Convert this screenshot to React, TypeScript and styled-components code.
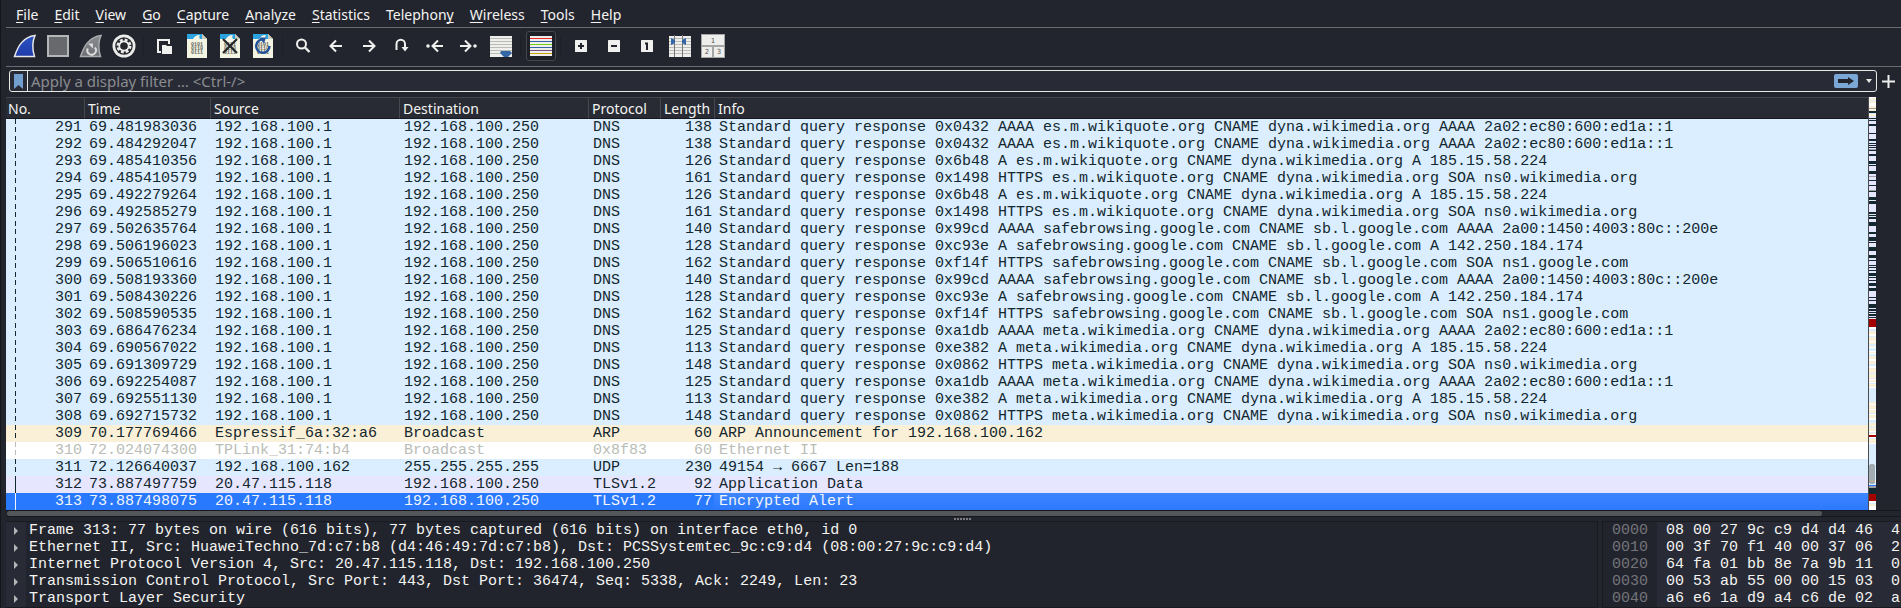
import React from "react";
import styled, { createGlobalStyle, css } from "styled-components";

const mono = `"Liberation Mono", monospace`;
const sans = `"Noto Sans", sans-serif`;

const Global = createGlobalStyle`
  * { box-sizing: border-box; }
  body { margin: 0; background: #23252e; }
  #root { min-height: 100vh; display: flex; flex-direction: column; }
  button, input { font: inherit; color: inherit; }
`;

const Window = styled.main`
  display: flex;
  flex-direction: column;
  flex: 1;
  min-width: 0;
  height: 100vh;
  overflow: hidden;
  padding-left: 5px;
  border-left: 1px solid #14151b;
  color: #f4f4f2;
  background: #23252e;
  font: 14px/20px ${sans};
`;

const MenuBar = styled.nav`
  display: flex;
  gap: 16px;
  height: 27px;
  padding: 5px 10px 0;
`;

const MenuItem = styled.button`
  padding: 0;
  border: 0;
  background: none;
  line-height: 20px;
  height: 20px;
  white-space: pre;
`;

const Key = styled.span`
  text-decoration: underline 1px #f4f4f2;
  text-underline-offset: 2px;
  text-decoration-skip-ink: none;
`;

const ToolBar = styled.div`
  display: flex;
  align-items: center;
  gap: 3px;
  height: 40px;
  padding: 0 4px 2px;
  border-top: 1px solid #6b6c71;
  border-bottom: 1px solid #6b6c71;
`;

const Tool = styled.button<{ $on?: boolean }>`
  display: grid;
  place-items: center;
  width: 30px;
  height: 30px;
  padding: 0;
  border: 1px solid ${(p) => (p.$on ? "#45474e" : "transparent")};
  border-radius: 3px;
  background: ${(p) => (p.$on ? "#1e2027" : "none")};
`;

const Divider = styled.span`
  width: 1px;
  height: 20px;
  margin: 0 2px 0 1px;
  background: #1e2027;
`;

const FilterBar = styled.form`
  display: flex;
  align-items: center;
  height: 30px;
  padding: 0 1px 2px 3px;
`;

const FilterBox = styled.div`
  display: flex;
  align-items: center;
  flex: 1;
  height: 22px;
  border: 1px solid #e9e9e4;
  border-radius: 3px;
  background: #282a35;
`;

const FilterButton = styled.button`
  display: grid;
  place-items: center;
  height: 20px;
  padding: 0 4px;
  border: 0;
  background: none;
`;

const Bookmark = styled(FilterButton)`
  border-right: 1px solid #e9e9e4;
`;

const AddFilter = styled(FilterButton)`
  padding: 0 5px;
`;

const FilterInput = styled.input`
  flex: 1;
  min-width: 0;
  height: 20px;
  padding: 0 3px;
  border: 0;
  outline: 0;
  background: none;
  font-size: 15px;
  &::placeholder { color: #8b8c90; opacity: 1; }
`;

const PacketArea = styled.section`
  display: flex;
`;

const TableClip = styled.div`
  flex: 1;
  min-width: 0;
  overflow: hidden;
  border-right: 1px solid #4a4b4f;
`;

const Table = styled.table`
  width: 100%;
  table-layout: fixed;
  border-collapse: separate;
  border-spacing: 0;
`;

const Head = styled.th`
  height: 22px;
  padding: 2px 0 0 3px;
  overflow: hidden;
  border-top: 1px solid #42454b;
  border-bottom: 1px solid #17181e;
  background: #282b33;
  font-weight: 400;
  line-height: 18px;
  text-align: left;
  white-space: nowrap;
  &:first-child { padding-left: 2px; }
  & + & { border-left: 1px solid #45484e; }
`;

type Tone = "dns" | "arp" | "plain" | "tls" | "selected";
const tones: Record<Tone, [string, string]> = {
  dns: ["#daeeff", "#12272e"],
  arp: ["#faf0d7", "#12272e"],
  plain: ["#ffffff", "#babdb6"],
  tls: ["#e7e6ff", "#12272e"],
  selected: ["#2979ff", "#f2f5fa"],
};

const Row = styled.tr<{ $tone: Tone }>`
  background: ${(p) => tones[p.$tone][0]};
  color: ${(p) => tones[p.$tone][1]};
  ${(p) =>
    p.$tone === "selected" &&
    css`
      td:last-child { background: linear-gradient(#3e86ff, #2b79ff); }
    `}
`;

const Cell = styled.td<{ $right?: boolean }>`
  height: 17px;
  padding: 0 2px 0 5px;
  overflow: hidden;
  font: 15px/17px ${mono};
  text-align: ${(p) => (p.$right ? "right" : "left")};
  white-space: pre;
`;

const NumberCell = styled(Cell)<{ $line: "dashed" | "solid" }>`
  background-image: ${(p) =>
    p.$line === "dashed"
      ? "linear-gradient(currentColor 0 5px, transparent 5px 8px, currentColor 8px 13px, transparent 13px 17px)"
      : "linear-gradient(currentColor, currentColor)"};
  background-size: 1px 17px;
  background-position: 9px 0;
  background-repeat: no-repeat;
`;

const Overview = styled.svg`
  flex: none;
  display: block;
  width: 7px;
  margin-right: 25px;
`;

const ScrollTrack = styled.div`
  padding: 0 79px 0 1px;
  border-top: 1px solid #17181e;
  border-bottom: 1px solid #17181e;
`;

const ScrollThumb = styled.div`
  height: 5px;
  border-radius: 3px;
  background: #55565a;
`;

const Splitter = styled.div`
  display: flex;
  justify-content: center;
  gap: 1px;
  height: 4px;
  padding: 1px 0 0 17px;
`;

const Grip = styled.span`
  width: 2px;
  height: 2px;
  background: #7c7d82;
`;

const Panes = styled.section`
  display: flex;
  flex: 1;
  gap: 4px;
  min-height: 0;
  font: 15px/17px ${mono};
  white-space: pre;
`;

const Pane = styled.div`
  border: solid #191a20;
  border-width: 1px 1px 1px 0;
  overflow: hidden;
`;

const Tree = styled(Pane)`
  flex: 1;
  min-width: 0;
`;

const List = styled.ul`
  margin: 0;
  padding: 0;
  height: 100%;
  list-style: none;
  background: linear-gradient(90deg, #282a35 20px, #22242d 20px);
`;

const Item = styled.li`
  display: flex;
  align-items: center;
  height: 17px;
`;

const Expander = styled.button`
  display: grid;
  place-items: center;
  width: 20px;
  height: 17px;
  margin-right: 3px;
  padding: 1px 0 0;
  border: 0;
  background: none;
`;

const HexPane = styled(Pane)`
  width: 299px;
  border-width: 1px 0 1px 1px;
  background: linear-gradient(90deg, #22242d 54px, #282a35 54px);
`;

const HexRow = styled.div`
  display: flex;
  height: 17px;
  padding-left: 9px;
`;

const Offset = styled.span`
  width: 54px;
  color: #74757a;
`;

const Bytes = styled.span`
  width: 225px;
`;

const menus: [string, string, string][] = [
  ["", "F", "ile"], ["", "E", "dit"], ["", "V", "iew"], ["", "G", "o"],
  ["", "C", "apture"], ["", "A", "nalyze"], ["", "S", "tatistics"],
  ["Telephon", "y", ""], ["", "W", "ireless"], ["", "T", "ools"], ["", "H", "elp"],
];

const Fin = ({ grey }: { grey?: boolean }) => (
  <svg width="24" height="24" viewBox="0 0 24 24">
    <defs>
      <linearGradient id={grey ? "fg" : "fb"} x1="0" y1="0" x2="0" y2="1">
        <stop offset="0" stopColor={grey ? "#8b8d91" : "#2b54c4"} />
        <stop offset="1" stopColor={grey ? "#6d6f74" : "#1f3ba8"} />
      </linearGradient>
    </defs>
    <path d="M1.5 22.5C5 12 10 3 22 1.500C19 8 19.500 16 21.500 22.500Z"
      fill={grey ? "url(#fg)" : "url(#fb)"} stroke={grey ? "#a9aaad" : "#e8e8ea"} strokeWidth="1.500" />
    {grey && (
      <>
        <path d="M8.800 14.500A4.300 4.300 0 1 0 15.800 13.500" fill="none" stroke="#dcdcdc" strokeWidth="2" />
        <path d="M9 9.500h5v5z" fill="#dcdcdc" />
      </>
    )}
  </svg>
);

const Stop = () => (
  <svg width="24" height="24" viewBox="0 0 24 24">
    <rect x="2" y="2" width="20" height="20" fill="#67696d" stroke="#b5b6b8" strokeWidth="2" />
  </svg>
);

const Gear = () => (
  <svg width="24" height="24" viewBox="0 0 24 24">
    <circle cx="12" cy="12" r="11.500" fill="#ececea" />
    <circle cx="12" cy="12" r="8.800" fill="#26272c" />
    <circle cx="12" cy="12" r="6" fill="none" stroke="#ececea" strokeWidth="3" strokeDasharray="2.700 2.012" />
    <circle cx="12" cy="12" r="4.600" fill="none" stroke="#ececea" strokeWidth="2" />
    <circle cx="12" cy="12" r="3.600" fill="#26272c" />
  </svg>
);

const OpenFile = () => (
  <svg width="24" height="24" viewBox="0 0 24 24">
    <path d="M9 18H6V6h11v4" fill="none" stroke="#f0f0ee" strokeWidth="2" />
    <path d="M10 11h4l1 1h5v8H10z" fill="#f0f0ee" />
  </svg>
);

const Doc = ({ kind }: { kind?: "close" | "reload" }) => (
  <svg width="24" height="24" viewBox="0 0 24 24" fontFamily="Liberation Mono, monospace" fontSize="5" fontWeight="700">
    <path d="M2 0h15l5 5v19H2z" fill="#f4f4e2" />
    <path d="M2 0h15v5H2z" fill="#2aa3e0" />
    <path d="M8 5C9 3 11 1 15 1c-1 1-1 3 0 4z" fill="#f4f4e2" />
    <path d="M17 0l5 5h-5z" fill="#c9cabc" />
    <g fill="#66675f">
      <text x="6" y="12">0101</text>
      <text x="6" y="16">0110</text>
      <text x="6" y="20">0111</text>
    </g>
    {kind === "close" && <path d="M5 5l14 14M19 5L5 19" stroke="#24262b" strokeWidth="2.200" />}
    {kind === "reload" && (
      <>
        <path d="M13 5.500A6.700 6.700 0 1 0 18.500 12" fill="none" stroke="#21529b" strokeWidth="2.400" />
        <path d="M8 3.500h7l-2 6z" fill="#21529b" />
      </>
    )}
  </svg>
);

const Stroke = ({ d, dot }: { d: string; dot?: number }) => (
  <svg width="24" height="24" viewBox="0 0 24 24">
    <path d={d} fill="none" stroke="#f0f0ee" strokeWidth="2" />
    {dot && <circle cx={dot} cy="12" r="1.800" fill="#f0f0ee" />}
  </svg>
);

const Search = () => (
  <svg width="24" height="24" viewBox="0 0 24 24">
    <circle cx="10.500" cy="10" r="4.500" fill="none" stroke="#f0f0ee" strokeWidth="2" />
    <path d="M14 13.500l4.500 4.500" stroke="#f0f0ee" strokeWidth="2.400" />
  </svg>
);

const Jump = () => (
  <svg width="24" height="24" viewBox="0 0 24 24">
    <path d="M6.500 16V10a4.200 4.200 0 0 1 8.500 0V14" fill="none" stroke="#f0f0ee" strokeWidth="2" />
    <path d="M11.500 13h7l-3.500 4.500z" fill="#f0f0ee" />
  </svg>
);

const grey: string[] = Array(6).fill("#babdb6");

const Lines = ({ colors, scroll, columns }: { colors: string[]; scroll?: boolean; columns?: boolean }) => (
  <svg width="24" height="24" viewBox="0 0 24 24">
    <path d={colors === grey ? "M1 2h22v21H1z" : "M1 2h22v20H1z"} fill="#eeeeec" />
    {colors.map((c, i) => <path key={i} d={`M1 ${4.5 + i * 3}h22`} stroke={c} strokeWidth="1" />)}
    {scroll && <path d="M11 19l1-2h9l2 2-4 4h-4z" fill="#3465a4" />}
    {columns && (
      <>
        <path d="M6.500 1v22M14.500 1v22" stroke="#77787a" />
        <path d="M3 4l4 2v3l-4 2zM18 4l-4 2v3l4 2z" fill="#3465a4" />
      </>
    )}
  </svg>
);

const Zoom = ({ d }: { d: string }) => (
  <svg width="24" height="24" viewBox="0 0 24 24">
    <rect x="6" y="6" width="12" height="12" rx="0.500" fill="#f0f0ee" />
    <path d={d} fill="none" stroke="#23252e" strokeWidth="2" />
  </svg>
);

const LayoutIcon = () => (
  <svg width="24" height="24" viewBox="0 0 24 24" fontFamily="DejaVu Sans, sans-serif" fontSize="7" textAnchor="middle">
    <path d="M0 0h24v24H0z" fill="#a4a5a5" />
    <path d="M1 1h22v10H1zM1 13h10v10H1zM13 13h10v10H13z" fill="#eeeeec" />
    <g fill="#555753">
      <text x="12" y="9">1</text>
      <text x="6" y="20">2</text>
      <text x="18" y="20">3</text>
    </g>
  </svg>
);

const tools: (null | [string, React.ReactNode, boolean?])[] = [
  ["Start capture", <Fin />],
  ["Stop capture", <Stop />],
  ["Restart capture", <Fin grey />],
  ["Capture options", <Gear />],
  null,
  ["Open", <OpenFile />],
  ["Save", <Doc />],
  ["Close file", <Doc kind="close" />],
  ["Reload", <Doc kind="reload" />],
  null,
  ["Find packet", <Search />],
  ["Previous packet", <Stroke d="M18 12H7M12 6.500L6.500 12l5.500 5.500" />],
  ["Next packet", <Stroke d="M6 12h11M12 6.500L17.500 12l-5.500 5.500" />],
  ["Go to packet", <Jump />],
  ["First packet", <Stroke d="M20 12H10M15 6.500L9.500 12l5.500 5.500" dot={5} />],
  ["Last packet", <Stroke d="M4 12h10M9 6.500L14.500 12l-5.500 5.500" dot={19} />],
  ["Auto scroll", <Lines colors={grey} scroll />],
  null,
  ["Colorize", <Lines colors={["#ef2929", "#3465a4", "#73d216", "#3465a4", "#75507b", "#c4a000"]} />, true],
  null,
  ["Zoom in", <Zoom d="M12 9v6M9 12h6" />],
  ["Zoom out", <Zoom d="M9 12h6" />],
  ["Normal size", <Zoom d="M10 9.500h2V16" />],
  ["Resize columns", <Lines colors={grey} columns />],
  ["Reset layout", <LayoutIcon />],
];

type Packet = [number, string, string, string, string, number, string, Tone?];
const A = "192.168.100.1";
const B = "192.168.100.250";
const R = "Standard query response ";
const W = "CNAME dyna.wikimedia.org ";
const S = "safebrowsing.google.com CNAME sb.l.google.com ";
const v6 = "AAAA 2a02:ec80:600:ed1a::1";
const v4 = "A 185.15.58.224";
const soa = "SOA ns0.wikimedia.org";
const packets: Packet[] = [
  [291, "69.481983036", A, B, "DNS", 138, `${R}0x0432 AAAA es.m.wikiquote.org ${W}${v6}`],
  [292, "69.484292047", A, B, "DNS", 138, `${R}0x0432 AAAA es.m.wikiquote.org ${W}${v6}`],
  [293, "69.485410356", A, B, "DNS", 126, `${R}0x6b48 A es.m.wikiquote.org ${W}${v4}`],
  [294, "69.485410579", A, B, "DNS", 161, `${R}0x1498 HTTPS es.m.wikiquote.org ${W}${soa}`],
  [295, "69.492279264", A, B, "DNS", 126, `${R}0x6b48 A es.m.wikiquote.org ${W}${v4}`],
  [296, "69.492585279", A, B, "DNS", 161, `${R}0x1498 HTTPS es.m.wikiquote.org ${W}${soa}`],
  [297, "69.502635764", A, B, "DNS", 140, `${R}0x99cd AAAA ${S}AAAA 2a00:1450:4003:80c::200e`],
  [298, "69.506196023", A, B, "DNS", 128, `${R}0xc93e A ${S}A 142.250.184.174`],
  [299, "69.506510616", A, B, "DNS", 162, `${R}0xf14f HTTPS ${S}SOA ns1.google.com`],
  [300, "69.508193360", A, B, "DNS", 140, `${R}0x99cd AAAA ${S}AAAA 2a00:1450:4003:80c::200e`],
  [301, "69.508430226", A, B, "DNS", 128, `${R}0xc93e A ${S}A 142.250.184.174`],
  [302, "69.508590535", A, B, "DNS", 162, `${R}0xf14f HTTPS ${S}SOA ns1.google.com`],
  [303, "69.686476234", A, B, "DNS", 125, `${R}0xa1db AAAA meta.wikimedia.org ${W}${v6}`],
  [304, "69.690567022", A, B, "DNS", 113, `${R}0xe382 A meta.wikimedia.org ${W}${v4}`],
  [305, "69.691309729", A, B, "DNS", 148, `${R}0x0862 HTTPS meta.wikimedia.org ${W}${soa}`],
  [306, "69.692254087", A, B, "DNS", 125, `${R}0xa1db AAAA meta.wikimedia.org ${W}${v6}`],
  [307, "69.692551130", A, B, "DNS", 113, `${R}0xe382 A meta.wikimedia.org ${W}${v4}`],
  [308, "69.692715732", A, B, "DNS", 148, `${R}0x0862 HTTPS meta.wikimedia.org ${W}${soa}`],
  [309, "70.177769466", "Espressif_6a:32:a6", "Broadcast", "ARP", 60, "ARP Announcement for 192.168.100.162", "arp"],
  [310, "72.024074300", "TPLink_31:74:b4", "Broadcast", "0x8f83", 60, "Ethernet II", "plain"],
  [311, "72.126640037", "192.168.100.162", "255.255.255.255", "UDP", 230, "49154 → 6667 Len=188"],
  [312, "73.887497759", "20.47.115.118", B, "TLSv1.2", 92, "Application Data", "tls"],
  [313, "73.887498075", "20.47.115.118", B, "TLSv1.2", 77, "Encrypted Alert", "selected"],
];

// Overview bands, each a start offset and a colour letter; a band runs until the next one.
const bandColors: Record<string, string> = {
  k: "#12272e", l: "#e7e6ff", b: "#daeeff", c: "#faf0d7", w: "#ffffff",
  g: "#a0a0a0", r: "#a40000", s: "#2979ff", p: "#f3e2f5",
};
const bands = (
  "0w 1c 3b 4c 6w 9c 11g 12c 14k 16b 17c 19l 21k 22l 23k 24l 27k 29l 36k 37l 42k 44l 46k 47l 48k 49l 50k 51l 52g 53k 54l " +
  "57k 59l 64k 67l 68k 69l 74k 77l 79g 80l 83k 84l 88k 89l 93g 94k 95l 100k 103l 104k 107l 115k 117l 118k 119l 120k 122l " +
  "125k 129l 135k 137l 140k 144l 145k 146l 150k 154l 158k 161l 163k 164l 168k 169l 170k 171l 173k 174l 176k 179l 180k 181l " +
  "183k 184l 186k 189l 191k 194l 200k 201l 203k 204l 207k 211l 212k 214l 215k 216l 217k 219l 220k 221l 222r 230w 232b 234c " +
  "237w 239b 240c 244w 245c 247b 249c 250w 251b 254w 255c 256w 257b 259c 262w 264c 267b 269w 271c 276b 277c 281p 282w 283c " +
  "285w 286b 287c 290w 291b 305c 307w 308c 312w 313c 316b 317w 318c 321w 323b 326c 330b 331c 334w 335b 336c 337w 338r 340w " +
  "341b 342c 346w 347b 383c 385b 388s 389g 391k 397r 404w 406b 407c 409w"
)
  .split(" ")
  .map((b) => ({ y: parseInt(b, 10), fill: bandColors[b.slice(-1)] }));

const details = [
  "Frame 313: 77 bytes on wire (616 bits), 77 bytes captured (616 bits) on interface eth0, id 0",
  "Ethernet II, Src: HuaweiTechno_7d:c7:b8 (d4:46:49:7d:c7:b8), Dst: PCSSystemtec_9c:c9:d4 (08:00:27:9c:c9:d4)",
  "Internet Protocol Version 4, Src: 20.47.115.118, Dst: 192.168.100.250",
  "Transmission Control Protocol, Src Port: 443, Dst Port: 36474, Seq: 5338, Ack: 2249, Len: 23",
  "Transport Layer Security",
];

const hex: [string, string, string][] = [
  ["0000", "08 00 27 9c c9 d4 d4 46", "4"],
  ["0010", "00 3f 70 f1 40 00 37 06", "2"],
  ["0020", "64 fa 01 bb 8e 7a 9b 11", "0"],
  ["0030", "00 53 ab 55 00 00 15 03", "0"],
  ["0040", "a6 e6 1a d9 a4 c6 de 02", "a"],
];

const columns: [string, number | undefined][] = [
  ["No.", 78], ["Time", 126], ["Source", 189], ["Destination", 189],
  ["Protocol", 72], ["Length", 54], ["Info", undefined],
];

function OverviewMap() {
  return (
    <Overview viewBox="0 0 7 413" shapeRendering="crispEdges" aria-hidden="true">
      {bands.map(({ y, fill }, i) => (
        <rect key={i} y={y} width="7" height={(bands[i + 1]?.y ?? 413) - y} fill={fill} />
      ))}
      <rect y="367" width="6" height="20" rx="3" fill="#80808099" />
    </Overview>
  );
}

export default function App() {
  return (
    <>
      <Global />
      <Window>
        <MenuBar>
          {menus.map(([before, key, after]) => (
            <MenuItem key={before + key + after}>{before}<Key>{key}</Key>{after}</MenuItem>
          ))}
        </MenuBar>
        <ToolBar role="toolbar">
          {tools.map((tool, i) =>
            tool ? <Tool key={i} aria-label={tool[0]} $on={tool[2]}>{tool[1]}</Tool> : <Divider key={i} />
          )}
        </ToolBar>
        <FilterBar>
          <FilterBox>
            <Bookmark type="button" aria-label="Filter bookmarks">
              <svg width="9" height="15" viewBox="0 0 9 15"><path d="M0 0h9v15l-4.500-4L0 15z" fill="#729fcf" /></svg>
            </Bookmark>
            <FilterInput aria-label="Display filter" placeholder="Apply a display filter … <Ctrl-/>" />
            <FilterButton aria-label="Apply filter">
              <svg width="24" height="14" viewBox="0 0 24 14">
                <rect width="24" height="14" rx="2" fill="#7ba7d7" />
                <path d="M4 5h10V3l6 4-6 4V9H4z" fill="#23252e" />
              </svg>
            </FilterButton>
            <FilterButton type="button" aria-label="Recent filters">
              <svg width="6" height="4" viewBox="0 0 6 4"><path d="M0 0h6L3 4z" fill="#e9e9e4" /></svg>
            </FilterButton>
          </FilterBox>
          <AddFilter type="button" aria-label="Add filter button">
            <svg width="13" height="13" viewBox="0 0 13 13"><path d="M6.500 0v13M0 6.500h13" stroke="#eeeeec" strokeWidth="2" /></svg>
          </AddFilter>
        </FilterBar>
        <PacketArea>
          <TableClip>
            <Table>
              <colgroup>
                {columns.map(([name, width]) => <col key={name} width={width} />)}
              </colgroup>
              <thead>
                <tr>{columns.map(([name]) => <Head key={name} scope="col">{name}</Head>)}</tr>
              </thead>
              <tbody>
                {packets.map(([no, time, src, dst, proto, len, info, tone = "dns"]) => (
                  <Row key={no} $tone={tone}>
                    <NumberCell $right $line={no > 311 ? "solid" : "dashed"}>{no}</NumberCell>
                    <Cell>{time}</Cell>
                    <Cell>{src}</Cell>
                    <Cell>{dst}</Cell>
                    <Cell>{proto}</Cell>
                    <Cell $right>{len}</Cell>
                    <Cell>{info}</Cell>
                  </Row>
                ))}
              </tbody>
            </Table>
          </TableClip>
          <OverviewMap />
        </PacketArea>
        <ScrollTrack><ScrollThumb /></ScrollTrack>
        <Splitter>{[0, 1, 2, 3, 4, 5].map((n) => <Grip key={n} />)}</Splitter>
        <Panes>
          <Tree>
            <List>
              {details.map((text) => (
                <Item key={text}>
                  <Expander aria-label="Expand">
                    <svg width="4" height="8" viewBox="0 0 4 8"><path d="M0 0l4 4-4 4z" fill="#b4b5b7" /></svg>
                  </Expander>
                  {text}
                </Item>
              ))}
            </List>
          </Tree>
          <HexPane>
            {hex.map(([offset, bytes, more]) => (
              <HexRow key={offset}><Offset>{offset}</Offset><Bytes>{bytes}</Bytes><span>{more}</span></HexRow>
            ))}
          </HexPane>
        </Panes>
      </Window>
    </>
  );
}
